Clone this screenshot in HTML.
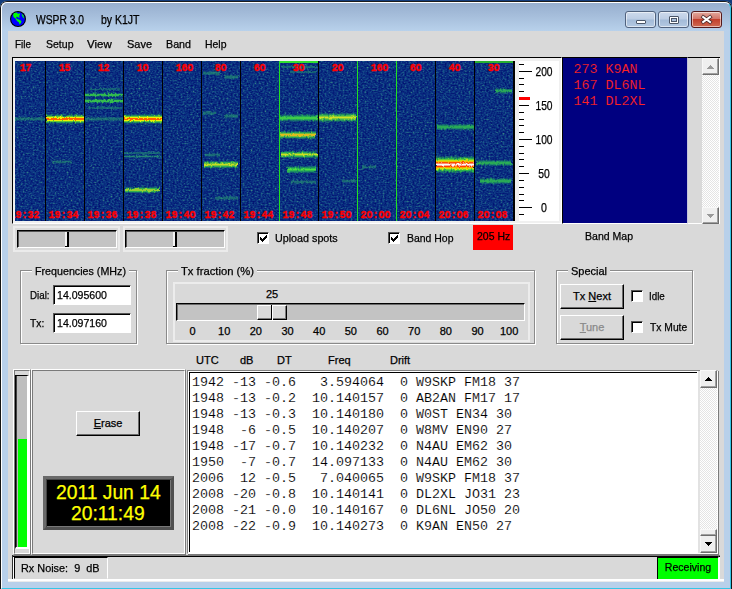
<!DOCTYPE html>
<html><head><meta charset="utf-8"><title>WSPR 3.0</title>
<style>
html,body{margin:0;padding:0;}
body{width:732px;height:589px;overflow:hidden;background:#123c7c;position:relative;font-family:"Liberation Sans",sans-serif;}
div,span,svg{position:absolute;box-sizing:border-box;}
.t{white-space:pre;-webkit-text-stroke:0.25px currentColor;}
.wl{font-family:'Liberation Mono',monospace;font-weight:bold;font-size:10px;fill:#ff0000;stroke:#ff0000;stroke-width:0.35px;}
.btn{background:#d9d9d9;border-style:solid;border-width:1px 1px 1px 1px;border-color:#fff #000 #000 #fff;box-shadow:inset -1px -1px 0 #6a6a6a;}
.grp{border:1px solid #8a8a8a;box-shadow:1px 1px 0 #fff, inset 1px 1px 0 #fff;}
.cb{background:#fff;border:1px solid;border-color:#555 #fff #fff #555;box-shadow:inset 1px 1px 0 #000;}
.ent{background:#fff;border:1px solid;border-color:#555 #fff #fff #555;box-shadow:inset 1px 1px 0 #000;}
</style></head><body>

<div style="left:0px;top:1px;width:732px;height:589px;background:#b8d0ea;border-radius:7px 7px 0 0;overflow:hidden;"><div style="left:0px;top:0px;width:732px;height:30px;background:linear-gradient(#97afcf 8%,#a6bedb 50%,#b8d1eb);"></div></div>
<div style="left:0px;top:1px;width:732px;height:589px;border:1px solid #141414;border-top-color:#1c1c1c;border-radius:7px 7px 0 0;"></div>
<div style="left:1px;top:2px;width:730px;height:587px;border:1px solid #fff;border-right-color:#35c6e6;border-bottom-color:#35c6e6;border-radius:6px 6px 0 0;"></div>
<div style="left:8px;top:31px;width:716px;height:551px;background:#d9d9d9;"></div>
<svg style="left:10px;top:11px" width="16" height="16" viewBox="0 0 16 16">
<circle cx="8" cy="8" r="8" fill="#000"/><circle cx="8" cy="8" r="6.9" fill="#0000ff"/>
<path d="M4 2 L7 1.5 L8 3 L9.5 2 L10 4 L9 5 L10 6.5 L8 6.5 L7 5.5 L6 6.5 L7 8 L9 8.5 L11.5 10 L11 12 L9.5 13.5 L9 11.5 L7 10 L5.5 7.5 L3.5 6 L3 4 Z" fill="#00ff00"/>
<path d="M11.5 2.5 L13.5 4.5 L14.3 7.5 L13 6.5 L12 4.5 Z" fill="#00ff00"/>
</svg>
<div class="t" style="top:13.84px;font-size:12px;line-height:12px;color:#000;font-family:'Liberation Sans',sans-serif;left:36px;transform-origin:0 0;transform:scaleX(0.8569);">WSPR 3.0</div>
<div class="t" style="top:13.84px;font-size:12px;line-height:12px;color:#000;font-family:'Liberation Sans',sans-serif;left:100.5px;transform-origin:0 0;transform:scaleX(0.8747);">by K1JT</div>
<div style="left:625px;top:11px;width:31px;height:16.5px;background:linear-gradient(#cddaec,#bccde4 47%,#a3bbd8 53%,#b4c9e2);border:1px solid #50627e;border-radius:3px;box-shadow:inset 0 0 0 1px rgba(255,255,255,.55);"></div>
<div style="left:658px;top:11px;width:31px;height:16.5px;background:linear-gradient(#cddaec,#bccde4 47%,#a3bbd8 53%,#b4c9e2);border:1px solid #50627e;border-radius:3px;box-shadow:inset 0 0 0 1px rgba(255,255,255,.55);"></div>
<div style="left:691px;top:11px;width:31px;height:16.5px;background:linear-gradient(#e3a99d,#d4776a 45%,#c2402c 50%,#cf6a52);border:1px solid #55191a;border-radius:3px;box-shadow:inset 0 0 0 1px rgba(255,255,255,.55);"></div>
<div style="left:636px;top:19.5px;width:10px;height:4px;background:#fff;border:1px solid #4a5668;border-radius:1px;"></div>
<div style="left:669px;top:15.5px;width:10px;height:8px;border:1px solid #4a5668;border-radius:1px;background:#fff;"></div>
<div style="left:671px;top:17.5px;width:6px;height:4px;background:#a8bedb;border:1px solid #4a5668;"></div>
<svg style="left:700px;top:14px" width="14" height="11" viewBox="0 0 14 11"><path d="M3.2 3 L10 8 M10 3 L3.2 8" stroke="#4a2a2a" stroke-width="3.6" stroke-linecap="square"/><path d="M3.2 3 L10 8 M10 3 L3.2 8" stroke="#fff" stroke-width="2.1" stroke-linecap="square"/></svg>
<div class="t" style="top:38.83px;font-size:10.6px;line-height:10.6px;color:#000;font-family:'Liberation Sans',sans-serif;left:15px;transform-origin:0 0;transform:scaleX(0.9368);">File</div>
<div class="t" style="top:38.83px;font-size:10.6px;line-height:10.6px;color:#000;font-family:'Liberation Sans',sans-serif;left:45.5px;transform-origin:0 0;transform:scaleX(0.9927);">Setup</div>
<div class="t" style="top:38.83px;font-size:10.6px;line-height:10.6px;color:#000;font-family:'Liberation Sans',sans-serif;left:87.3px;transform-origin:0 0;transform:scaleX(1.0841);">View</div>
<div class="t" style="top:38.83px;font-size:10.6px;line-height:10.6px;color:#000;font-family:'Liberation Sans',sans-serif;left:127.3px;transform-origin:0 0;transform:scaleX(1.0347);">Save</div>
<div class="t" style="top:38.83px;font-size:10.6px;line-height:10.6px;color:#000;font-family:'Liberation Sans',sans-serif;left:166px;transform-origin:0 0;transform:scaleX(1.0099);">Band</div>
<div class="t" style="top:38.83px;font-size:10.6px;line-height:10.6px;color:#000;font-family:'Liberation Sans',sans-serif;left:205px;transform-origin:0 0;transform:scaleX(0.9862);">Help</div>
<div style="left:12px;top:57px;width:550px;height:167px;background:#f0f0f0;border:1px solid;border-color:#000 #fff #fff #000;"></div>
<svg style="left:15px;top:61px" width="498" height="160" viewBox="0 0 498 160"><defs>
<filter id="nz" x="0" y="0" width="100%" height="100%" color-interpolation-filters="sRGB">
<feTurbulence type="fractalNoise" baseFrequency="0.5 0.62" numOctaves="2" seed="3" result="n"/>
<feColorMatrix in="n" type="matrix" values="1 0 0 0 0  1 0 0 0 0  1 0 0 0 0  0 0 0 0 1"/>
<feComponentTransfer>
<feFuncR type="table" tableValues="0 0 0 0.015 0.028 0.04 0.06 0.09 0.16 0.26 0.36"/>
<feFuncG type="table" tableValues="0.04 0.05 0.07 0.1 0.135 0.185 0.245 0.32 0.42 0.56 0.66"/>
<feFuncB type="table" tableValues="0.4 0.42 0.44 0.46 0.485 0.505 0.525 0.535 0.52 0.48 0.44"/>
</feComponentTransfer>
<feGaussianBlur stdDeviation="0.45"/>
</filter>
<filter id="rough" x="-2%" y="-2%" width="104%" height="104%"><feTurbulence type="fractalNoise" baseFrequency="0.45 0.3" numOctaves="2" seed="11" result="t"/><feDisplacementMap in="SourceGraphic" in2="t" scale="3.2" xChannelSelector="R" yChannelSelector="G"/></filter>
<filter id="b1" x="-5%" y="-100%" width="110%" height="300%"><feGaussianBlur stdDeviation="0.6 1.1"/></filter>
<filter id="b2" x="-5%" y="-100%" width="110%" height="300%"><feGaussianBlur stdDeviation="0.8 2.2"/></filter>
</defs><rect width="498" height="160" fill="#0b3080"/><rect width="498" height="160" filter="url(#nz)"/><defs><linearGradient id="gfaint" x1="0" y1="0" x2="0" y2="1"><stop offset="0" stop-color="#1a8a6a" stop-opacity="0"/><stop offset="0.5" stop-color="#2aa070" stop-opacity="0.75"/><stop offset="1" stop-color="#1a8a6a" stop-opacity="0"/></linearGradient><linearGradient id="gmed" x1="0" y1="0" x2="0" y2="1"><stop offset="0" stop-color="#20a060" stop-opacity="0"/><stop offset="0.3" stop-color="#28c050" stop-opacity="0.8"/><stop offset="0.5" stop-color="#50e040" stop-opacity="1"/><stop offset="0.7" stop-color="#28c050" stop-opacity="0.8"/><stop offset="1" stop-color="#20a060" stop-opacity="0"/></linearGradient><linearGradient id="gmedd" x1="0" y1="0" x2="0" y2="1"><stop offset="0" stop-color="#1a9060" stop-opacity="0"/><stop offset="0.3" stop-color="#22b058" stop-opacity="0.7"/><stop offset="0.5" stop-color="#38cc48" stop-opacity="0.9"/><stop offset="0.7" stop-color="#22b058" stop-opacity="0.7"/><stop offset="1" stop-color="#1a9060" stop-opacity="0"/></linearGradient><linearGradient id="gmedy" x1="0" y1="0" x2="0" y2="1"><stop offset="0" stop-color="#20a060" stop-opacity="0"/><stop offset="0.25" stop-color="#30c848" stop-opacity="0.8"/><stop offset="0.5" stop-color="#d0e020" stop-opacity="1"/><stop offset="0.75" stop-color="#30c848" stop-opacity="0.8"/><stop offset="1" stop-color="#20a060" stop-opacity="0"/></linearGradient><linearGradient id="gstry" x1="0" y1="0" x2="0" y2="1"><stop offset="0" stop-color="#20a060" stop-opacity="0"/><stop offset="0.25" stop-color="#30c848" stop-opacity="0.8"/><stop offset="0.42" stop-color="#d8d020" stop-opacity="1"/><stop offset="0.5" stop-color="#f09010" stop-opacity="1"/><stop offset="0.58" stop-color="#d8d020" stop-opacity="1"/><stop offset="0.75" stop-color="#30c848" stop-opacity="0.8"/><stop offset="1" stop-color="#20a060" stop-opacity="0"/></linearGradient><linearGradient id="gstr" x1="0" y1="0" x2="0" y2="1"><stop offset="0" stop-color="#20a060" stop-opacity="0"/><stop offset="0.2" stop-color="#30d040" stop-opacity="0.8"/><stop offset="0.35" stop-color="#f0f000" stop-opacity="1"/><stop offset="0.45" stop-color="#ff6000" stop-opacity="1"/><stop offset="0.5" stop-color="#ff2000" stop-opacity="1"/><stop offset="0.55" stop-color="#ff6000" stop-opacity="1"/><stop offset="0.65" stop-color="#f0f000" stop-opacity="1"/><stop offset="0.8" stop-color="#30d040" stop-opacity="0.8"/><stop offset="1" stop-color="#20a060" stop-opacity="0"/></linearGradient><linearGradient id="gvstr" x1="0" y1="0" x2="0" y2="1"><stop offset="0" stop-color="#20a060" stop-opacity="0"/><stop offset="0.18" stop-color="#30d040" stop-opacity="0.85"/><stop offset="0.3" stop-color="#f0f000" stop-opacity="1"/><stop offset="0.4" stop-color="#ff3000" stop-opacity="1"/><stop offset="0.46" stop-color="#ffc0b0" stop-opacity="1"/><stop offset="0.5" stop-color="#ffffff" stop-opacity="1"/><stop offset="0.54" stop-color="#ffc0b0" stop-opacity="1"/><stop offset="0.6" stop-color="#ff3000" stop-opacity="1"/><stop offset="0.7" stop-color="#f0f000" stop-opacity="1"/><stop offset="0.82" stop-color="#30d040" stop-opacity="0.85"/><stop offset="1" stop-color="#20a060" stop-opacity="0"/></linearGradient></defs><g filter="url(#rough)"><rect x="0" y="55.50" width="30" height="5" fill="url(#gfaint)"/><rect x="31" y="53.00" width="38" height="10" fill="url(#gstr)"/><rect x="37" y="99.00" width="20" height="4" fill="url(#gfaint)"/><rect x="70" y="55.50" width="38" height="5" fill="url(#gfaint)"/><rect x="70" y="32.00" width="38" height="4" fill="url(#gmed)"/><rect x="70" y="37.75" width="38" height="4.5" fill="url(#gmed)"/><rect x="75" y="26.50" width="30" height="3" fill="url(#gfaint)"/><rect x="73" y="45.50" width="34" height="3" fill="url(#gfaint)"/><rect x="109" y="53.00" width="38" height="10" fill="url(#gstr)"/><rect x="109" y="90.50" width="37" height="3" fill="url(#gfaint)"/><rect x="109" y="94.00" width="37" height="3" fill="url(#gfaint)"/><rect x="110" y="125.75" width="35" height="6.5" fill="url(#gmedy)"/><rect x="188" y="9.50" width="17" height="5" fill="url(#gfaint)"/><rect x="209" y="13.50" width="14" height="5" fill="url(#gfaint)"/><rect x="188" y="49.50" width="13" height="5" fill="url(#gfaint)"/><rect x="209" y="52.50" width="14" height="5" fill="url(#gfaint)"/><rect x="189" y="99.60" width="34" height="8" fill="url(#gmedy)"/><rect x="190" y="92.00" width="15" height="4" fill="url(#gfaint)"/><rect x="200" y="135.00" width="23" height="4" fill="url(#gfaint)"/><rect x="265" y="53.00" width="38" height="8" fill="url(#gmed)"/><rect x="265" y="69.50" width="36" height="9" fill="url(#gstry)"/><rect x="266" y="89.50" width="36" height="8" fill="url(#gmedy)"/><rect x="272" y="104.50" width="29" height="8" fill="url(#gmed)"/><rect x="275" y="119.00" width="26" height="4" fill="url(#gfaint)"/><rect x="267" y="4.50" width="35" height="3" fill="url(#gfaint)"/><rect x="275" y="9.50" width="27" height="3" fill="url(#gfaint)"/><rect x="304" y="51.50" width="37" height="10" fill="url(#gmedy)"/><rect x="328" y="118.00" width="13" height="4" fill="url(#gfaint)"/><rect x="347" y="104.00" width="14" height="4" fill="url(#gfaint)"/><rect x="422" y="62.50" width="37" height="7" fill="url(#gmedd)"/><rect x="421" y="94.60" width="38" height="18" fill="url(#gvstr)"/><rect x="480" y="27.00" width="17" height="6" fill="url(#gmedd)"/><rect x="461" y="98.50" width="36" height="7" fill="url(#gmedd)"/><rect x="465" y="116.50" width="31" height="7" fill="url(#gmedd)"/></g><rect x="30" y="0" width="1" height="160" fill="#000"/><rect x="69" y="0" width="1" height="160" fill="#000"/><rect x="108" y="0" width="1" height="160" fill="#000"/><rect x="147" y="0" width="1" height="160" fill="#000"/><rect x="186" y="0" width="1" height="160" fill="#000"/><rect x="225" y="0" width="1" height="160" fill="#000"/><rect x="264" y="0" width="1" height="160" fill="#20e020"/><rect x="303" y="0" width="1" height="160" fill="#000"/><rect x="342" y="0" width="1" height="160" fill="#20e020"/><rect x="381" y="0" width="1" height="160" fill="#20e020"/><rect x="420" y="0" width="1" height="160" fill="#000"/><rect x="459" y="0" width="1" height="160" fill="#000"/><rect x="265" y="0" width="38" height="2" fill="#30e030"/><rect x="460" y="0" width="38" height="2" fill="#28b030"/><text x="4.8" y="9.9" letter-spacing="-0.3" class="wl">17</text><text x="-5.4" y="156.6" class="wl">19:32</text><text x="43.8" y="9.9" letter-spacing="-0.3" class="wl">15</text><text x="33.6" y="156.6" class="wl">19:34</text><text x="82.8" y="9.9" letter-spacing="-0.3" class="wl">12</text><text x="72.6" y="156.6" class="wl">19:36</text><text x="121.8" y="9.9" letter-spacing="-0.3" class="wl">1O</text><text x="111.6" y="156.6" class="wl">19:38</text><text x="160.8" y="9.9" letter-spacing="-0.3" class="wl">16O</text><text x="150.6" y="156.6" class="wl">19:4O</text><text x="199.8" y="9.9" letter-spacing="-0.3" class="wl">8O</text><text x="189.6" y="156.6" class="wl">19:42</text><text x="238.8" y="9.9" letter-spacing="-0.3" class="wl">6O</text><text x="228.6" y="156.6" class="wl">19:44</text><text x="277.8" y="9.9" letter-spacing="-0.3" class="wl">3O</text><text x="267.6" y="156.6" class="wl">19:48</text><text x="316.8" y="9.9" letter-spacing="-0.3" class="wl">2O</text><text x="306.6" y="156.6" class="wl">19:5O</text><text x="355.8" y="9.9" letter-spacing="-0.3" class="wl">16O</text><text x="345.6" y="156.6" class="wl">2O:OO</text><text x="394.8" y="9.9" letter-spacing="-0.3" class="wl">6O</text><text x="384.6" y="156.6" class="wl">2O:O4</text><text x="433.8" y="9.9" letter-spacing="-0.3" class="wl">4O</text><text x="423.6" y="156.6" class="wl">2O:O6</text><text x="472.8" y="9.9" letter-spacing="-0.3" class="wl">3O</text><text x="462.6" y="156.6" class="wl">2O:O8</text></svg>
<div style="left:513px;top:61px;width:2px;height:160px;background:#000;"></div>
<div style="left:519px;top:61px;width:40px;height:160px;background:#fff;"></div>
<div style="left:519px;top:214px;width:5px;height:1px;background:#000;"></div><div style="left:519px;top:207px;width:13px;height:1px;background:#000;"></div><div class="t" style="top:201.64px;font-size:12px;line-height:12px;color:#000;font-family:'Liberation Sans',sans-serif;left:444.20000000000005px;width:200px;text-align:center;transform:scaleX(0.884);">0</div><div style="left:519px;top:200px;width:5px;height:1px;background:#000;"></div><div style="left:519px;top:194px;width:5px;height:1px;background:#000;"></div><div style="left:519px;top:187px;width:5px;height:1px;background:#000;"></div><div style="left:519px;top:180px;width:5px;height:1px;background:#000;"></div><div style="left:519px;top:173px;width:10px;height:1px;background:#000;"></div><div class="t" style="top:167.64px;font-size:12px;line-height:12px;color:#000;font-family:'Liberation Sans',sans-serif;left:444.20000000000005px;width:200px;text-align:center;transform:scaleX(0.8616);">50</div><div style="left:519px;top:166px;width:5px;height:1px;background:#000;"></div><div style="left:519px;top:159px;width:5px;height:1px;background:#000;"></div><div style="left:519px;top:153px;width:5px;height:1px;background:#000;"></div><div style="left:519px;top:146px;width:5px;height:1px;background:#000;"></div><div style="left:519px;top:139px;width:13px;height:1px;background:#000;"></div><div class="t" style="top:133.64px;font-size:12px;line-height:12px;color:#000;font-family:'Liberation Sans',sans-serif;left:444.20000000000005px;width:200px;text-align:center;transform:scaleX(0.8541);">100</div><div style="left:519px;top:132px;width:5px;height:1px;background:#000;"></div><div style="left:519px;top:125px;width:5px;height:1px;background:#000;"></div><div style="left:519px;top:119px;width:5px;height:1px;background:#000;"></div><div style="left:519px;top:112px;width:5px;height:1px;background:#000;"></div><div style="left:519px;top:105px;width:10px;height:1px;background:#000;"></div><div class="t" style="top:99.64px;font-size:12px;line-height:12px;color:#000;font-family:'Liberation Sans',sans-serif;left:444.20000000000005px;width:200px;text-align:center;transform:scaleX(0.8541);">150</div><div style="left:519px;top:98px;width:5px;height:1px;background:#000;"></div><div style="left:519px;top:91px;width:5px;height:1px;background:#000;"></div><div style="left:519px;top:84px;width:5px;height:1px;background:#000;"></div><div style="left:519px;top:78px;width:5px;height:1px;background:#000;"></div><div style="left:519px;top:71px;width:13px;height:1px;background:#000;"></div><div class="t" style="top:65.64px;font-size:12px;line-height:12px;color:#000;font-family:'Liberation Sans',sans-serif;left:444.20000000000005px;width:200px;text-align:center;transform:scaleX(0.8541);">200</div><div style="left:519px;top:64px;width:5px;height:1px;background:#000;"></div><div style="left:519px;top:97px;width:11px;height:3px;background:#ff0000;"></div>
<div style="left:562px;top:57px;width:126px;height:167px;background:#000080;border:1px solid;border-color:#000 #c4c4dc #fff #000;"></div>
<div style="left:688px;top:57px;width:32px;height:1px;background:#000;"></div>
<div style="left:719px;top:58px;width:1px;height:166px;background:#fff;"></div>
<div style="left:688px;top:223px;width:32px;height:1px;background:#fff;"></div>
<div class="t" style="top:62.78px;font-size:13.333px;line-height:13.333px;color:#ff2222;font-family:'Liberation Mono',monospace;left:573.5px;-webkit-text-stroke:0.12px #000080;">273 K9AN</div>
<div class="t" style="top:78.78px;font-size:13.333px;line-height:13.333px;color:#ff2222;font-family:'Liberation Mono',monospace;left:573.5px;-webkit-text-stroke:0.12px #000080;">167 DL6NL</div>
<div class="t" style="top:94.78px;font-size:13.333px;line-height:13.333px;color:#ff2222;font-family:'Liberation Mono',monospace;left:573.5px;-webkit-text-stroke:0.12px #000080;">141 DL2XL</div>
<div style="left:702px;top:58px;width:17px;height:166px;background:#efefef;background-image:repeating-conic-gradient(#ffffff 0% 25%, #e4e4e4 0% 50%);background-size:2px 2px;"></div><div style="left:702px;top:58px;width:17px;height:17px;background:#efefef;border:1px solid;border-color:#f8f8f8 #6e6e6e #6e6e6e #f8f8f8;box-shadow:inset -1px -1px 0 #a0a0a0;"><svg style="left:4px;top:6px" width="7" height="4" viewBox="0 0 7 4" shape-rendering="crispEdges" fill="#9a9a9a"><rect x="3" y="0" width="1" height="1"/><rect x="2" y="1" width="3" height="1"/><rect x="1" y="2" width="5" height="1"/><rect x="0" y="3" width="7" height="1"/></svg></div><div style="left:702px;top:207px;width:17px;height:17px;background:#efefef;border:1px solid;border-color:#f8f8f8 #6e6e6e #6e6e6e #f8f8f8;box-shadow:inset -1px -1px 0 #a0a0a0;"><svg style="left:4px;top:6px" width="7" height="4" viewBox="0 0 7 4" shape-rendering="crispEdges" fill="#9a9a9a"><rect x="0" y="0" width="7" height="1"/><rect x="1" y="1" width="5" height="1"/><rect x="2" y="2" width="3" height="1"/><rect x="3" y="3" width="1" height="1"/></svg></div>
<div style="left:13px;top:226px;width:107px;height:26px;border:2px solid #ebebeb;"></div><div style="left:17px;top:230px;width:100px;height:18px;background:#c3c3c3;border:1px solid;border-color:#000 #fff #fff #000;box-shadow:inset 1px 1px 0 #555;"></div><div style="left:65px;top:232px;width:2px;height:15px;background:#f4f4f4;"></div><div style="left:67px;top:232px;width:2px;height:15px;background:#000;"></div><div style="left:65px;top:246px;width:4px;height:1px;background:#000;"></div>
<div style="left:123px;top:226px;width:105px;height:26px;border:2px solid #ebebeb;"></div><div style="left:125px;top:230px;width:100px;height:18px;background:#c3c3c3;border:1px solid;border-color:#000 #fff #fff #000;box-shadow:inset 1px 1px 0 #555;"></div><div style="left:173px;top:232px;width:2px;height:15px;background:#f4f4f4;"></div><div style="left:175px;top:232px;width:2px;height:15px;background:#000;"></div><div style="left:173px;top:246px;width:4px;height:1px;background:#000;"></div>
<div class="cb" style="left:257px;top:232px;width:12px;height:12px;"></div><svg style="left:260px;top:235px" width="7" height="7" viewBox="0 0 7 7" shape-rendering="crispEdges"><rect x="0" y="2" width="1" height="3"/><rect x="1" y="3" width="1" height="3"/><rect x="2" y="4" width="1" height="3"/><rect x="3" y="3" width="1" height="3"/><rect x="4" y="2" width="1" height="3"/><rect x="5" y="1" width="1" height="3"/><rect x="6" y="0" width="1" height="3"/></svg>
<div class="t" style="top:232.69px;font-size:11px;line-height:11px;color:#000;font-family:'Liberation Sans',sans-serif;left:275.2px;transform-origin:0 0;transform:scaleX(0.9765);">Upload spots</div>
<div class="cb" style="left:388px;top:232px;width:12px;height:12px;"></div><svg style="left:391px;top:235px" width="7" height="7" viewBox="0 0 7 7" shape-rendering="crispEdges"><rect x="0" y="2" width="1" height="3"/><rect x="1" y="3" width="1" height="3"/><rect x="2" y="4" width="1" height="3"/><rect x="3" y="3" width="1" height="3"/><rect x="4" y="2" width="1" height="3"/><rect x="5" y="1" width="1" height="3"/><rect x="6" y="0" width="1" height="3"/></svg>
<div class="t" style="top:232.69px;font-size:11px;line-height:11px;color:#000;font-family:'Liberation Sans',sans-serif;left:406.5px;transform-origin:0 0;transform:scaleX(0.9504);">Band Hop</div>
<div style="left:473px;top:225px;width:40px;height:25px;background:#ff0000;"></div>
<div class="t" style="top:230.99px;font-size:11px;line-height:11px;color:#000;font-family:'Liberation Sans',sans-serif;left:476.6px;transform-origin:0 0;transform:scaleX(0.9526);">205 Hz</div>
<div class="t" style="top:230.69px;font-size:11px;line-height:11px;color:#000;font-family:'Liberation Sans',sans-serif;left:585.1px;transform-origin:0 0;transform:scaleX(0.9572);">Band Map</div>
<div class="grp" style="left:20px;top:270px;width:117px;height:74px;"></div><div style="left:32px;top:268px;width:97px;height:5px;background:#d9d9d9;"></div><div class="t" style="top:265.89px;font-size:11px;line-height:11px;color:#000;font-family:'Liberation Sans',sans-serif;left:35px;transform-origin:0 0;transform:scaleX(0.973);">Frequencies (MHz)</div>
<div class="t" style="top:289.69px;font-size:11px;line-height:11px;color:#000;font-family:'Liberation Sans',sans-serif;left:30px;transform-origin:0 0;transform:scaleX(0.8861);">Dial:</div>
<div class="ent" style="left:53px;top:285px;width:78px;height:20px;"></div>
<div class="t" style="top:289.69px;font-size:11px;line-height:11px;color:#000;font-family:'Liberation Sans',sans-serif;left:56.6px;transform-origin:0 0;transform:scaleX(0.9616);">14.095600</div>
<div class="t" style="top:317.69px;font-size:11px;line-height:11px;color:#000;font-family:'Liberation Sans',sans-serif;left:30px;transform-origin:0 0;transform:scaleX(0.9361);">Tx:</div>
<div class="ent" style="left:53px;top:313px;width:78px;height:20px;"></div>
<div class="t" style="top:317.69px;font-size:11px;line-height:11px;color:#000;font-family:'Liberation Sans',sans-serif;left:56.6px;transform-origin:0 0;transform:scaleX(0.9616);">14.097160</div>
<div class="grp" style="left:166px;top:270px;width:369px;height:74px;"></div><div style="left:178px;top:268px;width:79px;height:5px;background:#d9d9d9;"></div><div class="t" style="top:265.89px;font-size:11px;line-height:11px;color:#000;font-family:'Liberation Sans',sans-serif;left:181px;transform-origin:0 0;transform:scaleX(1.0208);">Tx fraction (%)</div>
<div style="left:173px;top:282px;width:357px;height:60px;border:2px solid #ececec;"></div>
<div class="t" style="top:288.69px;font-size:11px;line-height:11px;color:#000;font-family:'Liberation Sans',sans-serif;left:172px;width:200px;text-align:center;">25</div>
<div style="left:176px;top:303px;width:349px;height:18px;background:#c3c3c3;border:1px solid;border-color:#000 #fff #fff #000;box-shadow:inset 1px 1px 0 #6a6a6a;"></div>
<div style="left:257px;top:305px;width:30px;height:15px;background:#d9d9d9;border:1px solid;border-color:#fff #000 #000 #fff;box-shadow:inset -1px -1px 0 #7a7a7a;"></div>
<div style="left:271px;top:305px;width:1px;height:15px;background:#000;"></div>
<div style="left:272px;top:305px;width:1px;height:15px;background:#fff;"></div>
<div class="t" style="top:326.09px;font-size:11px;line-height:11px;color:#000;font-family:'Liberation Sans',sans-serif;left:92.5px;width:200px;text-align:center;">0</div>
<div class="t" style="top:326.09px;font-size:11px;line-height:11px;color:#000;font-family:'Liberation Sans',sans-serif;left:124.17000000000002px;width:200px;text-align:center;">10</div>
<div class="t" style="top:326.09px;font-size:11px;line-height:11px;color:#000;font-family:'Liberation Sans',sans-serif;left:155.84px;width:200px;text-align:center;">20</div>
<div class="t" style="top:326.09px;font-size:11px;line-height:11px;color:#000;font-family:'Liberation Sans',sans-serif;left:187.51px;width:200px;text-align:center;">30</div>
<div class="t" style="top:326.09px;font-size:11px;line-height:11px;color:#000;font-family:'Liberation Sans',sans-serif;left:219.18px;width:200px;text-align:center;">40</div>
<div class="t" style="top:326.09px;font-size:11px;line-height:11px;color:#000;font-family:'Liberation Sans',sans-serif;left:250.85000000000002px;width:200px;text-align:center;">50</div>
<div class="t" style="top:326.09px;font-size:11px;line-height:11px;color:#000;font-family:'Liberation Sans',sans-serif;left:282.52px;width:200px;text-align:center;">60</div>
<div class="t" style="top:326.09px;font-size:11px;line-height:11px;color:#000;font-family:'Liberation Sans',sans-serif;left:314.19px;width:200px;text-align:center;">70</div>
<div class="t" style="top:326.09px;font-size:11px;line-height:11px;color:#000;font-family:'Liberation Sans',sans-serif;left:345.86px;width:200px;text-align:center;">80</div>
<div class="t" style="top:326.09px;font-size:11px;line-height:11px;color:#000;font-family:'Liberation Sans',sans-serif;left:377.53000000000003px;width:200px;text-align:center;">90</div>
<div class="t" style="top:326.09px;font-size:11px;line-height:11px;color:#000;font-family:'Liberation Sans',sans-serif;left:409.20000000000005px;width:200px;text-align:center;">100</div>
<div class="grp" style="left:556px;top:270px;width:137px;height:74px;"></div><div style="left:568px;top:268px;width:42px;height:5px;background:#d9d9d9;"></div><div class="t" style="top:265.89px;font-size:11px;line-height:11px;color:#000;font-family:'Liberation Sans',sans-serif;left:571px;transform-origin:0 0;transform:scaleX(0.9978);">Special</div>
<div class="btn" style="left:560px;top:284px;width:64px;height:25px;"></div>
<div class="t" style="top:290.69px;font-size:11px;line-height:11px;color:#000;font-family:'Liberation Sans',sans-serif;left:492px;width:200px;text-align:center;">Tx <u>N</u>ext</div>
<div class="btn" style="left:560px;top:315px;width:64px;height:25px;"></div>
<div class="t" style="top:321.69px;font-size:11px;line-height:11px;color:#8a8a8a;font-family:'Liberation Sans',sans-serif;left:492px;width:200px;text-align:center;"><u>T</u>une</div>
<div class="cb" style="left:631px;top:290px;width:12px;height:12px;"></div>
<div class="t" style="top:290.69px;font-size:11px;line-height:11px;color:#000;font-family:'Liberation Sans',sans-serif;left:648.8px;transform-origin:0 0;transform:scaleX(0.8909);">Idle</div>
<div class="cb" style="left:631px;top:321px;width:12px;height:12px;"></div>
<div class="t" style="top:321.69px;font-size:11px;line-height:11px;color:#000;font-family:'Liberation Sans',sans-serif;left:649.5px;transform-origin:0 0;transform:scaleX(0.9363);">Tx Mute</div>
<div class="t" style="top:354.69px;font-size:11px;line-height:11px;color:#000;font-family:'Liberation Sans',sans-serif;left:196px;">UTC</div>
<div class="t" style="top:354.69px;font-size:11px;line-height:11px;color:#000;font-family:'Liberation Sans',sans-serif;left:240px;">dB</div>
<div class="t" style="top:354.69px;font-size:11px;line-height:11px;color:#000;font-family:'Liberation Sans',sans-serif;left:277px;">DT</div>
<div class="t" style="top:354.69px;font-size:11px;line-height:11px;color:#000;font-family:'Liberation Sans',sans-serif;left:328px;">Freq</div>
<div class="t" style="top:354.69px;font-size:11px;line-height:11px;color:#000;font-family:'Liberation Sans',sans-serif;left:390px;">Drift</div>
<div style="left:13px;top:369px;width:18px;height:186px;border:1px solid;border-color:#fff #7a7a7a #7a7a7a #fff;"></div><div style="left:14px;top:370px;width:16px;height:184px;border:1px solid;border-color:#7a7a7a #fff #fff #7a7a7a;"></div>
<div style="left:15px;top:375px;width:14px;height:174px;background:#bebebe;border-style:solid;border-width:1px 2px 2px 1px;border-color:#000 #fff #fff #000;box-shadow:inset 1px 0 0 #404040;"></div>
<div style="left:18px;top:439px;width:9px;height:108px;background:#00ff00;"></div>
<div style="left:31px;top:369px;width:155px;height:186px;border:1px solid;border-color:#fff #7a7a7a #7a7a7a #fff;"></div><div style="left:32px;top:370px;width:153px;height:184px;border:1px solid;border-color:#7a7a7a #fff #fff #7a7a7a;"></div>
<div class="btn" style="left:76px;top:411px;width:64px;height:25px;"></div>
<div class="t" style="top:417.69px;font-size:11px;line-height:11px;color:#000;font-family:'Liberation Sans',sans-serif;left:8px;width:200px;text-align:center;"><u>E</u>rase</div>
<div style="left:43px;top:476px;width:131px;height:54px;background:#000;border:3px solid;border-color:#6a6a6a #505050 #505050 #6a6a6a;box-shadow:inset 1px 1px 0 #444, inset -1px -1px 0 #777;"></div>
<div class="t" style="top:482.66px;font-size:19.3px;line-height:19.3px;color:#ffff00;font-family:'Liberation Sans',sans-serif;left:8.299999999999997px;width:200px;text-align:center;">2011 Jun 14</div>
<div class="t" style="top:504.46px;font-size:19.3px;line-height:19.3px;color:#ffff00;font-family:'Liberation Sans',sans-serif;left:7.799999999999997px;width:200px;text-align:center;">20:11:49</div>
<div style="left:187px;top:370px;width:531px;height:184px;background:#e2e2e2;border:1px solid;border-color:#828282 #fff #fff #828282;box-shadow:1px 1px 0 #7a7a7a;"></div>
<div style="left:188px;top:371px;width:510px;height:182px;background:#fff;border:1px solid;border-color:#fff #fff #fff #fff;box-shadow:inset 1px 1px 0 #000;"></div>
<div class="t" style="top:375.78px;font-size:13.333px;line-height:13.333px;color:#000;font-family:'Liberation Mono',monospace;left:192px;-webkit-text-stroke:0.12px #fff;">1942 -13 -0.6   3.594064  0 W9SKP FM18 37</div>
<div class="t" style="top:391.78px;font-size:13.333px;line-height:13.333px;color:#000;font-family:'Liberation Mono',monospace;left:192px;-webkit-text-stroke:0.12px #fff;">1948 -13 -0.2  10.140157  0 AB2AN FM17 17</div>
<div class="t" style="top:407.78px;font-size:13.333px;line-height:13.333px;color:#000;font-family:'Liberation Mono',monospace;left:192px;-webkit-text-stroke:0.12px #fff;">1948 -13 -0.3  10.140180  0 W0ST EN34 30</div>
<div class="t" style="top:423.78px;font-size:13.333px;line-height:13.333px;color:#000;font-family:'Liberation Mono',monospace;left:192px;-webkit-text-stroke:0.12px #fff;">1948  -6 -0.5  10.140207  0 W8MV EN90 27</div>
<div class="t" style="top:439.78px;font-size:13.333px;line-height:13.333px;color:#000;font-family:'Liberation Mono',monospace;left:192px;-webkit-text-stroke:0.12px #fff;">1948 -17 -0.7  10.140232  0 N4AU EM62 30</div>
<div class="t" style="top:455.78px;font-size:13.333px;line-height:13.333px;color:#000;font-family:'Liberation Mono',monospace;left:192px;-webkit-text-stroke:0.12px #fff;">1950  -7 -0.7  14.097133  0 N4AU EM62 30</div>
<div class="t" style="top:471.78px;font-size:13.333px;line-height:13.333px;color:#000;font-family:'Liberation Mono',monospace;left:192px;-webkit-text-stroke:0.12px #fff;">2006  12 -0.5   7.040065  0 W9SKP FM18 37</div>
<div class="t" style="top:487.78px;font-size:13.333px;line-height:13.333px;color:#000;font-family:'Liberation Mono',monospace;left:192px;-webkit-text-stroke:0.12px #fff;">2008 -20 -0.8  10.140141  0 DL2XL JO31 23</div>
<div class="t" style="top:503.78px;font-size:13.333px;line-height:13.333px;color:#000;font-family:'Liberation Mono',monospace;left:192px;-webkit-text-stroke:0.12px #fff;">2008 -21 -0.0  10.140167  0 DL6NL JO50 20</div>
<div class="t" style="top:519.78px;font-size:13.333px;line-height:13.333px;color:#000;font-family:'Liberation Mono',monospace;left:192px;-webkit-text-stroke:0.12px #fff;">2008 -22 -0.9  10.140273  0 K9AN EN50 27</div>
<div style="left:700px;top:370px;width:17px;height:183px;background:#efefef;background-image:repeating-conic-gradient(#ffffff 0% 25%, #e4e4e4 0% 50%);background-size:2px 2px;"></div><div style="left:700px;top:370px;width:17px;height:18px;background:#efefef;border:1px solid;border-color:#f8f8f8 #6e6e6e #6e6e6e #f8f8f8;box-shadow:inset -1px -1px 0 #a0a0a0;"><svg style="left:4px;top:6px" width="7" height="4" viewBox="0 0 7 4" shape-rendering="crispEdges" fill="#000"><rect x="3" y="0" width="1" height="1"/><rect x="2" y="1" width="3" height="1"/><rect x="1" y="2" width="5" height="1"/><rect x="0" y="3" width="7" height="1"/></svg></div><div style="left:700px;top:535px;width:17px;height:18px;background:#efefef;border:1px solid;border-color:#f8f8f8 #6e6e6e #6e6e6e #f8f8f8;box-shadow:inset -1px -1px 0 #a0a0a0;"><svg style="left:4px;top:6px" width="7" height="4" viewBox="0 0 7 4" shape-rendering="crispEdges" fill="#000"><rect x="0" y="0" width="7" height="1"/><rect x="1" y="1" width="5" height="1"/><rect x="2" y="2" width="3" height="1"/><rect x="3" y="3" width="1" height="1"/></svg></div><div style="left:700px;top:529px;width:17px;height:7px;background:#efefef;border:1px solid;border-color:#f8f8f8 #6e6e6e #6e6e6e #f8f8f8;box-shadow:inset -1px -1px 0 #a0a0a0;"></div>
<div style="left:12px;top:555px;width:708px;height:1px;background:#7a7a7a;"></div>
<div style="left:12px;top:555px;width:1px;height:24px;background:#303030;"></div>
<div style="left:13px;top:556px;width:707px;height:1px;background:#000;"></div>
<div style="left:13px;top:557px;width:1px;height:22px;background:#fff;"></div>
<div style="left:8px;top:579px;width:716px;height:2px;background:#fff;"></div>
<div style="left:8px;top:581px;width:716px;height:1px;background:#ebebeb;"></div>
<div style="left:719px;top:557px;width:1px;height:22px;background:#fff;"></div>
<div style="left:14px;top:557px;width:94px;height:22px;border:1px solid;border-color:#000 #fff #d9d9d9 #000;"></div>
<div class="t" style="top:562.99px;font-size:11px;line-height:11px;color:#000;font-family:'Liberation Sans',sans-serif;left:21px;transform-origin:0 0;transform:scaleX(0.9877);">Rx Noise:  9  dB</div>
<div style="left:657px;top:556px;width:62px;height:23px;background:#00ff00;border-style:solid;border-color:#000 #fff #fff #000;border-width:2px 1px 0 1px;"></div>
<div class="t" style="top:562.49px;font-size:11px;line-height:11px;color:#000;font-family:'Liberation Sans',sans-serif;left:587.6px;width:200px;text-align:center;transform:scaleX(0.9585);">Receiving</div>
</body></html>
